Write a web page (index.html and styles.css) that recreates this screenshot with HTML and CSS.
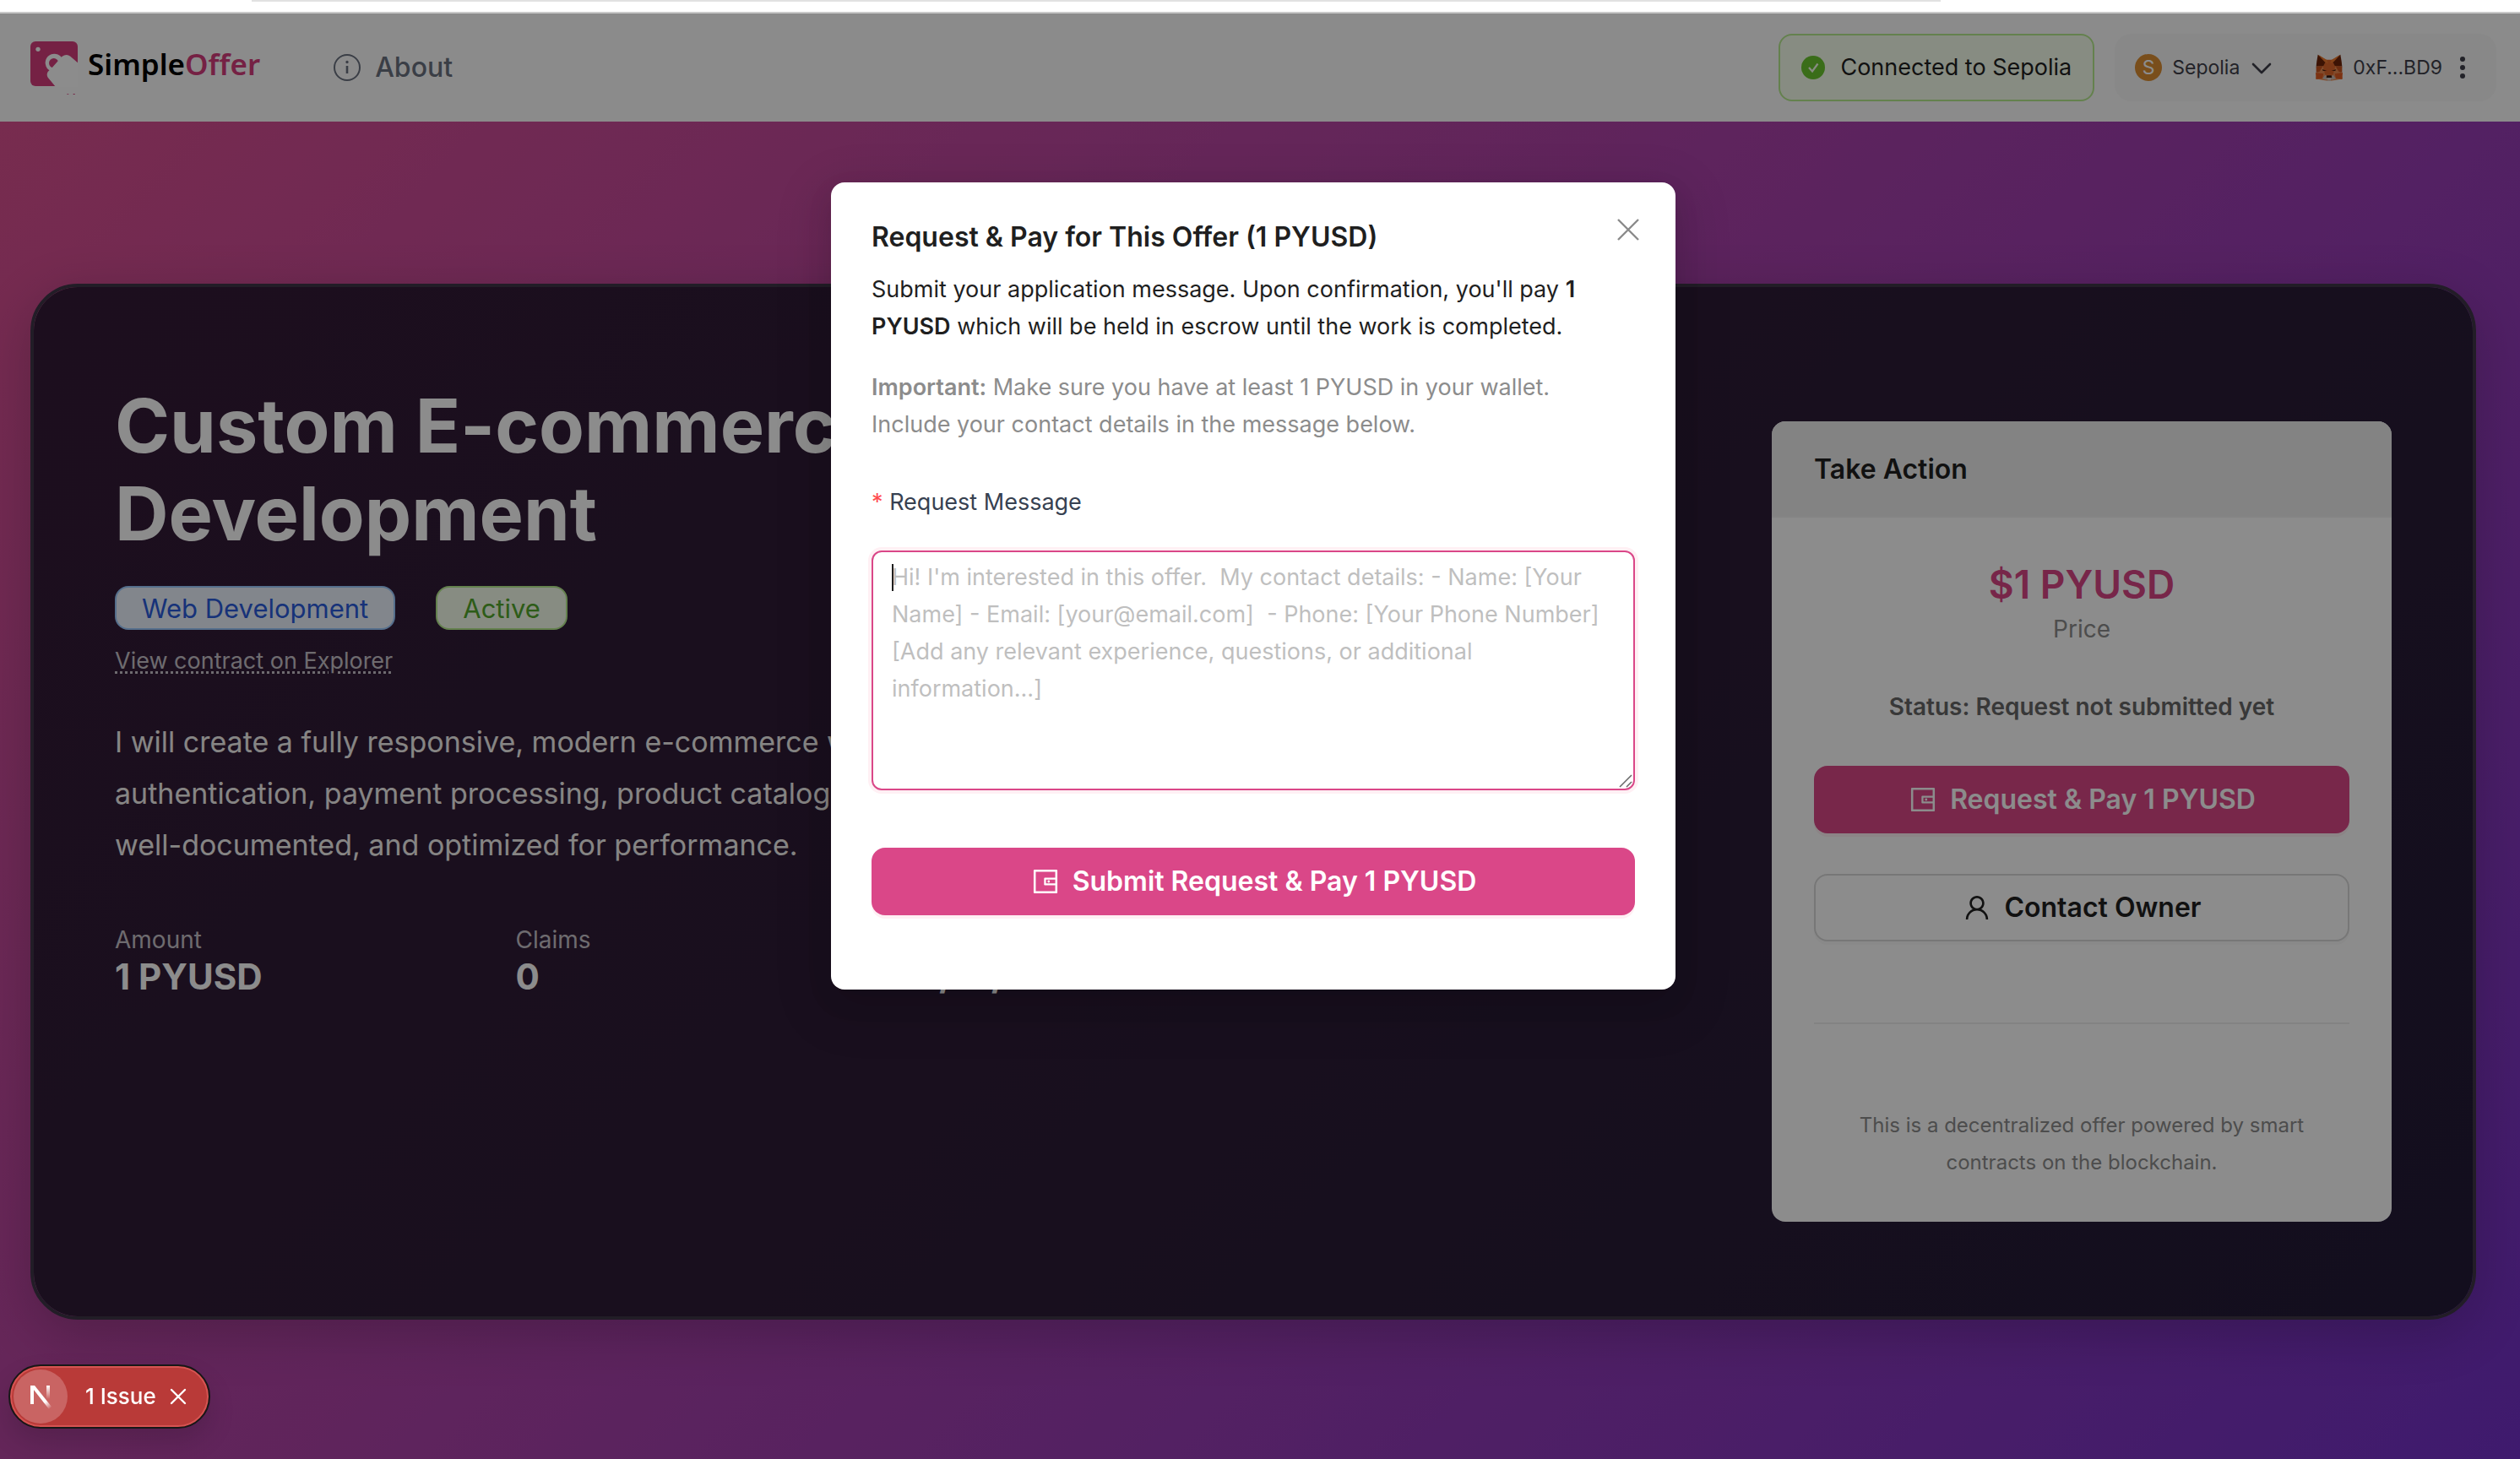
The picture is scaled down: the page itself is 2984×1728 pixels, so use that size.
FILE: index.html
```html
<!DOCTYPE html>
<html lang="en">
<head>
<meta charset="utf-8">
<title>SimpleOffer</title>
<link rel="stylesheet" href="styles.css">
</head>
<body>
<div class="browser-edge"><div class="address-edge"></div></div>
<div class="app">
  <header class="header">
    <nav class="nav">
      <a class="logo" href="#">
        <svg width="56" height="64" viewBox="0 0 168 192" aria-hidden="true">
          <rect width="168" height="159" rx="18" fill="#d63d7c"/>
          <circle cx="27" cy="28" r="8" fill="#fff"/>
          <circle cx="85" cy="76" r="32" fill="#fff"/>
          <circle cx="83" cy="77" r="17" fill="#d63d7c"/>
          <path d="M78 92L112 54Q128 42 142 53L168 76V162H90L62 128Q56 118 62 108Z" fill="#fff"/>
          <path d="M152 186h6v3h-6zM130 186h6v2h-6z" fill="#d63d7c"/>
        </svg>
        <span class="logo-text">Simple<span class="logo-accent">Offer</span></span>
      </a>
      <a class="nav-link" href="#">
        <svg width="34" height="34" viewBox="0 0 34 34" fill="none" stroke="currentColor" stroke-width="2" aria-hidden="true"><circle cx="17" cy="17" r="15"/><path d="M17 15v9" stroke-width="2.6"/><circle cx="17" cy="10.500" r="1" stroke-width="1.400" fill="currentColor"/></svg>
        <span>About</span>
      </a>
    </nav>
    <div class="header-side">
      <div class="connected">
        <svg width="28" height="28" viewBox="0 0 28 28" aria-hidden="true"><circle cx="14" cy="14" r="14" fill="#6ac62f"/><path d="M9 14l4 4.500 6.500-9" fill="none" stroke="#f6ffed" stroke-width="2.200"/></svg>
        <span>Connected to Sepolia</span>
      </div>
      <div class="wallet">
        <button class="wallet-btn" type="button">
          <span class="net-icon">S</span>
          <span>Sepolia</span>
          <svg class="chevron" width="24" height="24" viewBox="0 0 24 24" fill="none" stroke="currentColor" stroke-width="2.600" stroke-linecap="round" stroke-linejoin="round" aria-hidden="true"><path d="M2 8l10 10L22 8"/></svg>
        </button>
        <button class="wallet-btn" type="button">
          <svg width="32" height="32" viewBox="0 0 96 96" aria-hidden="true">
            <path d="M2 46L18 40H78L94 46L90 66L96 88L72 92L48 96L24 92L0 88L6 66Z" fill="#ec8a50"/>
            <path d="M36 20H60L70 44L62 74H34L26 44Z" fill="#e0672b"/>
            <path d="M8 2L38 22L28 42L2 44L4 26Z" fill="#6e2408"/>
            <path d="M88 2L58 22L68 42L94 44L92 26Z" fill="#6e2408"/>
            <path d="M8 2L40 21L44 34L32 28ZM88 2L56 21L52 34L64 28Z" fill="#f07a2e"/>
            <path d="M2 44L26 42L14 62L2 66ZM94 44L70 42L82 62L94 66Z" fill="#c6551f"/>
            <path d="M0 66L28 70L24 86L2 90ZM96 66L68 70L72 86L94 90Z" fill="#e05c22"/>
            <path d="M24 54L40 60L26 60ZM72 54L56 60L70 60Z" fill="#4a2110"/>
            <path d="M34 74L24 88L40 92V82ZM62 74L72 88L56 92V82Z" fill="#c9beb8"/>
            <path d="M40 76H56L58 84H38Z" fill="#35180e"/>
            <path d="M40 84H56L54 95H42Z" fill="#d8d0cc"/>
          </svg>
          <span>0xF...BD9</span>
          <svg class="dots" width="8" height="28" viewBox="0 0 8 28" fill="currentColor" aria-hidden="true"><circle cx="4" cy="4" r="3"/><circle cx="4" cy="14" r="3"/><circle cx="4" cy="24" r="3"/></svg>
        </button>
      </div>
    </div>
  </header>

  <main class="main">
    <article class="offer">
      <div class="details">
        <h1 class="title">Custom E-commerce Website<br>Development</h1>
        <div class="tags"><span class="tag tag-blue">Web Development</span><span class="tag tag-green">Active</span></div>
        <a class="explorer" href="#">View contract on Explorer</a>
        <p class="summary">I will create a fully responsive, modern e-commerce website with user<br>authentication, payment processing, product catalog, and admin panel. Code is<br>well-documented, and optimized for performance.</p>
        <dl class="stats">
          <div><dt>Amount</dt><dd>1 PYUSD</dd></div>
          <div><dt>Claims</dt><dd>0</dd></div>
          <div><dt>Created</dt><dd>8/18/2025</dd></div>
        </dl>
      </div>
      <aside class="action">
        <h2 class="action-head">Take Action</h2>
        <div class="action-body">
          <p class="price">$1 PYUSD</p>
          <p class="price-label">Price</p>
          <p class="status">Status: Request not submitted yet</p>
          <button class="btn btn-primary" type="button">
            <svg class="icon" viewBox="0 0 1024 1024" fill="currentColor" aria-hidden="true"><path d="M880 112H144c-17.700 0-32 14.300-32 32v736c0 17.700 14.300 32 32 32h736c17.700 0 32-14.300 32-32V144c0-17.700-14.300-32-32-32zm-40 464H528V448h312v128zm0 264H184V184h656v200H496c-17.700 0-32 14.300-32 32v192c0 17.700 14.300 32 32 32h344v200zM580 512a40 40 0 1080 0 40 40 0 10-80 0z"/></svg>
            <span>Request &amp; Pay 1 PYUSD</span>
          </button>
          <button class="btn btn-plain" type="button">
            <svg class="icon" viewBox="0 0 1024 1024" fill="currentColor" aria-hidden="true"><path d="M858.500 763.600a374 374 0 00-80.600-119.500 375.630 375.630 0 00-119.500-80.600c-.4-.2-.8-.3-1.200-.5C719.500 518 760 444.700 760 362c0-137-111-248-248-248S264 225 264 362c0 82.700 40.500 156 102.800 201.100-.4.2-.8.3-1.200.5-44.800 18.900-85 46-119.500 80.600a375.630 375.630 0 00-80.600 119.500A371.700 371.700 0 00136 901.800a8 8 0 008 8.200h60c4.400 0 7.900-3.500 8-7.800 2-77.200 33-149.500 87.800-204.300 56.700-56.700 132-87.900 212.200-87.900s155.500 31.200 212.200 87.900C779 752.700 810 825 812 902.200c.1 4.400 3.600 7.800 8 7.800h60a8 8 0 008-8.200c-1-47.800-10.900-94.300-29.500-138.200zM512 534c-45.900 0-89.100-17.900-121.600-50.400S340 407.900 340 362c0-45.900 17.900-89.100 50.400-121.600S466.100 190 512 190s89.100 17.900 121.600 50.400S684 316.100 684 362c0 45.900-17.900 89.100-50.400 121.600S557.900 534 512 534z"/></svg>
            <span>Contact Owner</span>
          </button>
          <hr class="divider">
          <p class="note">This is a decentralized offer powered by smart contracts on the blockchain.</p>
        </div>
      </aside>
    </article>
  </main>

  <div class="mask">
    <section class="modal" role="dialog" aria-modal="true" aria-labelledby="modal-title">
      <button class="close" type="button" aria-label="Close"><svg width="28" height="28" viewBox="0 0 28 28" fill="none" stroke="currentColor" stroke-width="2.400" aria-hidden="true"><path d="M2 2l24 24M26 2L2 26"/></svg></button>
      <h2 class="modal-title" id="modal-title">Request &amp; Pay for This Offer (1 PYUSD)</h2>
      <p class="lead">Submit your application message. Upon confirmation, you'll pay <strong>1<br>PYUSD</strong> which will be held in escrow until the work is completed.</p>
      <p class="hint"><strong>Important:</strong> Make sure you have at least 1 PYUSD in your wallet.<br>Include your contact details in the message below.</p>
      <form>
        <label class="label" for="message"><span class="required">*</span> Request Message</label>
        <div class="field">
          <textarea class="message" id="message" placeholder="Hi! I'm interested in this offer.  My contact details: - Name: [Your&#10;Name] - Email: [your@email.com]  - Phone: [Your Phone Number]&#10;[Add any relevant experience, questions, or additional&#10;information...]"></textarea>
          <span class="caret"></span>
          <svg class="grip" width="16" height="16" viewBox="0 0 16 16" fill="none" stroke="#666" stroke-width="1.500" aria-hidden="true"><path d="M1 15L15 1M9 15l6-6"/></svg>
        </div>
        <button class="btn btn-primary" type="button">
          <svg class="icon" viewBox="0 0 1024 1024" fill="currentColor" aria-hidden="true"><path d="M880 112H144c-17.700 0-32 14.300-32 32v736c0 17.700 14.300 32 32 32h736c17.700 0 32-14.300 32-32V144c0-17.700-14.300-32-32-32zm-40 464H528V448h312v128zm0 264H184V184h656v200H496c-17.700 0-32 14.300-32 32v192c0 17.700 14.300 32 32 32h344v200zM580 512a40 40 0 1080 0 40 40 0 10-80 0z"/></svg>
          <span>Submit Request &amp; Pay 1 PYUSD</span>
        </button>
      </form>
    </section>
  </div>
</div>

<div class="issues">
  <span class="issues-mark">
    <svg width="28" height="32" viewBox="0 0 28 32" aria-hidden="true">
      <defs>
        <linearGradient id="diag" gradientUnits="userSpaceOnUse" x1="14" y1="14" x2="26" y2="30"><stop offset="0.500" stop-color="#fff"/><stop offset="1" stop-color="#fff" stop-opacity="0"/></linearGradient>
        <linearGradient id="stem" x1="0" y1="0" x2="0" y2="1"><stop offset="0" stop-color="#fff"/><stop offset="1" stop-color="#fff" stop-opacity="0"/></linearGradient>
      </defs>
      <path d="M2 3h4v22H2z" fill="#fff"/>
      <path d="M2 3h5L27 28l-3 3z" fill="url(#diag)"/>
      <path d="M21 3h4v16h-4z" fill="url(#stem)"/>
    </svg>
  </span>
  <button class="issues-text" type="button">1 Issue</button>
  <button class="issues-close" type="button" aria-label="Dismiss"><svg width="20" height="20" viewBox="0 0 20 20" fill="none" stroke="#fff" stroke-width="2.400" stroke-linecap="round" aria-hidden="true"><path d="M2 2l16 16M18 2L2 18"/></svg></button>
</div>
</body>
</html>
```
FILE: styles.css
```css
* { box-sizing: border-box; }

body {
  margin: 0;
  min-height: 100vh;
  display: flex;
  flex-direction: column;
  font-family: Inter, "Liberation Sans", sans-serif;
  font-size: 27px;
  line-height: 44px;
  color: #1f1f1f;
}

h1, h2, p, dl, dd { margin: 0; }
a { color: inherit; text-decoration: none; }
button { font: inherit; color: inherit; background: none; border: 0; padding: 0; }
svg { display: block; flex: none; }

/* Lower edge of the browser toolbar */
.browser-edge {
  height: 16px;
  background: #fff;
  border-bottom: 2px solid #c8c8c8;
}
.address-edge {
  height: 2px;
  margin: 0 23% 0 10%;
  background: #e1e1e1;
}

.app {
  position: relative;
  flex: 1;
  display: flex;
  flex-direction: column;
}

/* Header */
.header {
  height: 128px;
  padding: 24px 28px 24px 36px;
  display: flex;
  justify-content: space-between;
  background: #fefefe;
}
.nav { display: flex; align-items: center; }
.logo { display: flex; align-items: center; gap: 12px; }
.logo svg { margin-top: 2px; }
.logo-text {
  font-family: "Noto Sans", sans-serif;
  font-size: 35px;
  font-weight: 600;
  line-height: 48px;
  color: #000;
  margin-bottom: 8px;
}
.logo-accent { color: #d63d7c; }
.nav-link {
  display: flex;
  align-items: center;
  gap: 16px;
  margin-left: 86px;
  font-size: 32px;
  font-weight: 500;
  color: #6b7280;
}
.header-side { display: flex; gap: 24px; }
.connected {
  display: flex;
  align-items: center;
  gap: 18px;
  padding: 0 25px;
  border: 2px solid #b7eb8f;
  border-radius: 16px;
  background: #f6ffed;
}
.wallet {
  display: flex;
  gap: 52px;
  padding: 0 36px 0 24px;
  border-radius: 20px;
  background: #f7f7f7;
  font-size: 23px;
  color: #3f3f4a;
}
.wallet-btn { display: flex; align-items: center; gap: 12px; }
.net-icon {
  width: 32px;
  height: 32px;
  border-radius: 50%;
  background: #dc8e32;
  color: #fff;
  line-height: 32px;
  text-align: center;
}
.chevron { margin-left: 2px; }
.dots { margin-left: 8px; }

/* Offer */
.main {
  flex: 1;
  padding: 192px 52px 166px 36px;
  background: linear-gradient(135deg, #da5090, #7331c8);
}
.offer {
  display: grid;
  grid-template-columns: minmax(0, 1fr) 734px;
  gap: 64px;
  padding: 112px 96px;
  border: 4px solid #3f3548;
  border-radius: 56px;
  background: linear-gradient(135deg, #341b37, #2e1d38 50%, #231b38) padding-box;
  box-shadow: 0 16px 64px rgba(0, 0, 0, 0.2);
  color: #fff;
}
.title {
  font-size: 88px;
  line-height: 104px;
  font-weight: 700;
}
.tags { display: flex; gap: 48px; margin-top: 34px; }
.tag {
  height: 52px;
  padding: 0 30px;
  border: 2px solid;
  border-radius: 16px;
  font-size: 31px;
  line-height: 50px;
}
.tag-blue { color: #2a5cdc; background: #edf5ff; border-color: #9ccaff; }
.tag-green { color: #52a82c; background: #f6ffed; border-color: #b7eb8f; }
.explorer {
  display: inline-block;
  margin-top: 15px;
  color: #c9c4cb;
  text-decoration: underline dotted 3px;
  text-underline-offset: 3px;
}
.summary {
  margin-top: 43px;
  font-size: 34px;
  line-height: 61px;
  color: #f4f2f0;
}
.stats {
  display: grid;
  grid-template-columns: repeat(4, 1fr);
  margin-top: 60px;
}
.stats dt { color: #c9c4cb; font-size: 28px; }
.stats dd { font-size: 42px; font-weight: 700; }

/* Action panel */
.action {
  margin-top: 47px;
  border-radius: 16px;
  overflow: hidden;
  background: #fff;
  color: #1f1f1f;
  text-align: center;
}
.action-head {
  padding: 33px 50px 31px;
  border-bottom: 2px solid #f0f0f0;
  background: #eee;
  font-size: 32px;
  font-weight: 600;
  line-height: 48px;
  text-align: left;
}
.action-body { padding: 48px 50px; }
.price {
  font-size: 46px;
  font-weight: 600;
  line-height: 62px;
  color: #d94686;
}
.price-label { font-size: 28px; color: #8c8c8c; }
.status {
  margin: 48px 0;
  font-size: 28px;
  font-weight: 600;
  color: #666;
}
.note { font-size: 24px; color: #8c8c8c; }
.divider {
  height: 2px;
  margin: 96px 0 98px;
  border: 0;
  background: #efefef;
}
.btn {
  width: 100%;
  height: 80px;
  display: flex;
  align-items: center;
  justify-content: center;
  gap: 14px;
  border-radius: 16px;
  font-size: 32px;
  font-weight: 600;
}
.btn-primary {
  background: #da4788;
  color: #fff;
  box-shadow: 0 4px 0 #fff0f4;
}
.btn-plain {
  margin-top: 48px;
  border: 2px solid #d9d9d9;
  background: #fff;
  box-shadow: 0 4px 0 #fafafa;
}
.icon { width: 36px; height: 36px; }

/* Modal */
.mask {
  position: absolute;
  inset: 0;
  padding: 200px 16px 0 0;
  background: rgba(0, 0, 0, 0.45);
}
.modal {
  position: relative;
  max-width: 1000px;
  margin: 0 auto;
  padding: 41px 48px 88px;
  border-radius: 16px;
  background: #fff;
  box-shadow: 0 12px 32px rgba(0, 0, 0, 0.08), 0 18px 56px 16px rgba(0, 0, 0, 0.1);
}
.close {
  position: absolute;
  top: 42px;
  right: 42px;
  color: #8a8a8a;
}
.modal-title { font-size: 32px; font-weight: 600; line-height: 48px; }
.lead { margin-top: 16px; }
.hint { margin-top: 28px; color: #8c8c8c; }
strong { font-weight: 600; }
.label {
  display: block;
  margin: 48px 0 35px;
  color: #374151;
}
.required { color: #ff4d4f; line-height: 1; }
.field { position: relative; margin-bottom: 68px; }
.message {
  display: block;
  width: 100%;
  height: 284px;
  padding: 8px 22px;
  border: 2px solid #da4788;
  border-radius: 12px;
  outline: 0;
  box-shadow: 0 0 0 4px #fff0f4;
  font: inherit;
  resize: none;
}
.message::placeholder { color: #bfbfbf; opacity: 1; }
.caret {
  position: absolute;
  top: 16px;
  left: 24px;
  width: 2px;
  height: 32px;
  background: #1f1f1f;
}
.grip { position: absolute; right: 3px; bottom: 3px; }

/* Development issue badge */
.issues {
  position: fixed;
  left: 10px;
  bottom: 36px;
  height: 76px;
  padding: 4px 26px 4px 4px;
  display: flex;
  align-items: center;
  border: 2px solid #171717;
  border-radius: 38px;
  background: #b93a38;
  box-shadow: inset 0 0 0 2px #d65453, 0 16px 32px rgba(0, 0, 0, 0.14);
  color: #fff;
  font-size: 26px;
}
.issues-mark {
  width: 64px;
  height: 64px;
  display: flex;
  align-items: center;
  justify-content: center;
  border-radius: 50%;
  background: #c96463;
}
.issues-text { margin: 0 16px 0 21px; font-weight: 500; }
```
